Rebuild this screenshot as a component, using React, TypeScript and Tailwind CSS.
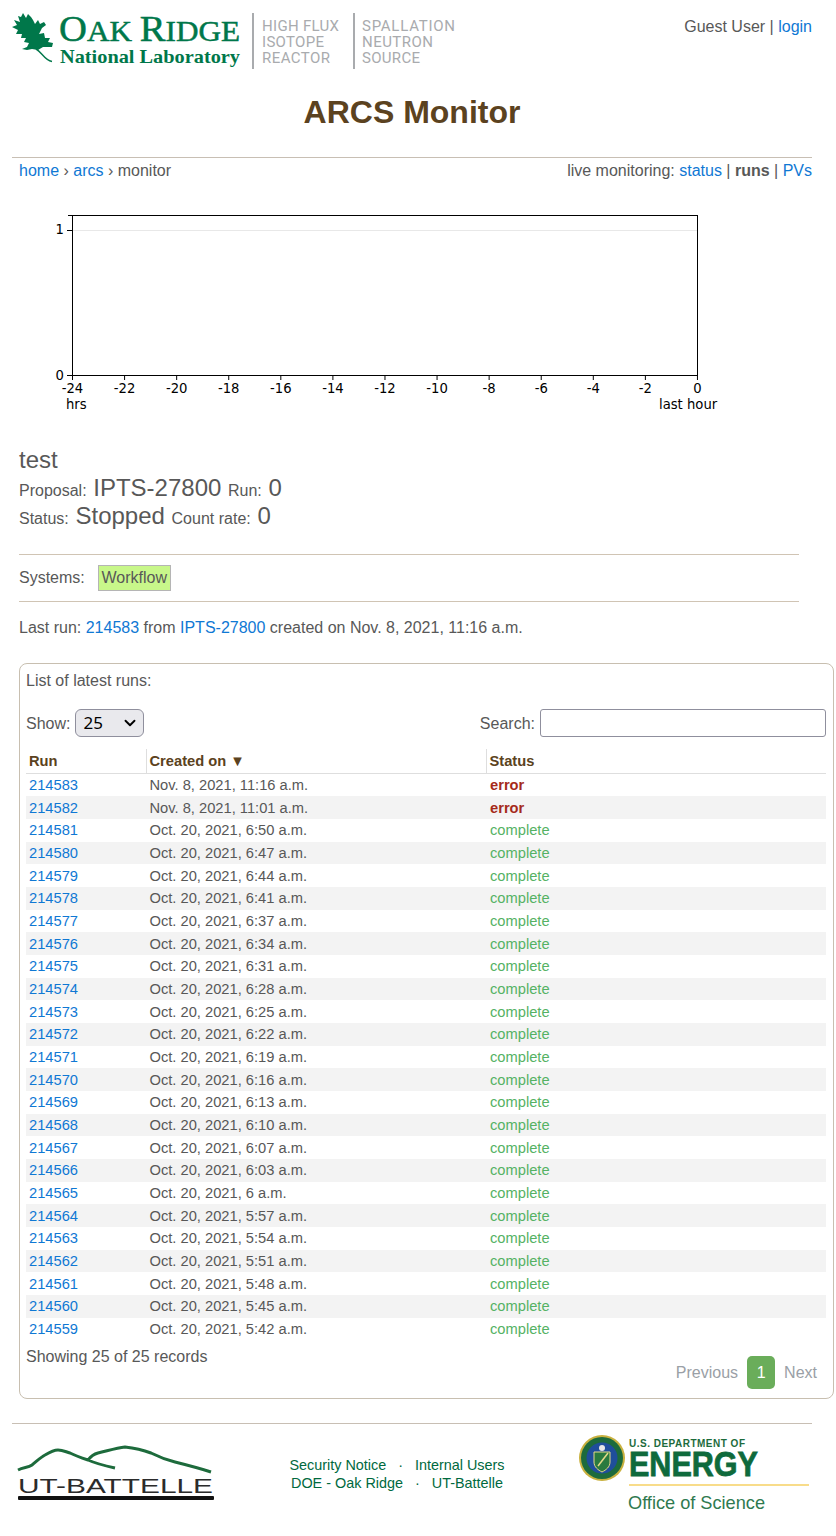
import { ChevronDown } from "lucide-react";

const runs: [number, string, string][] = [
  [214583, "Nov. 8, 2021, 11:16 a.m.", "error"],
  [214582, "Nov. 8, 2021, 11:01 a.m.", "error"],
  [214581, "Oct. 20, 2021, 6:50 a.m.", "complete"],
  [214580, "Oct. 20, 2021, 6:47 a.m.", "complete"],
  [214579, "Oct. 20, 2021, 6:44 a.m.", "complete"],
  [214578, "Oct. 20, 2021, 6:41 a.m.", "complete"],
  [214577, "Oct. 20, 2021, 6:37 a.m.", "complete"],
  [214576, "Oct. 20, 2021, 6:34 a.m.", "complete"],
  [214575, "Oct. 20, 2021, 6:31 a.m.", "complete"],
  [214574, "Oct. 20, 2021, 6:28 a.m.", "complete"],
  [214573, "Oct. 20, 2021, 6:25 a.m.", "complete"],
  [214572, "Oct. 20, 2021, 6:22 a.m.", "complete"],
  [214571, "Oct. 20, 2021, 6:19 a.m.", "complete"],
  [214570, "Oct. 20, 2021, 6:16 a.m.", "complete"],
  [214569, "Oct. 20, 2021, 6:13 a.m.", "complete"],
  [214568, "Oct. 20, 2021, 6:10 a.m.", "complete"],
  [214567, "Oct. 20, 2021, 6:07 a.m.", "complete"],
  [214566, "Oct. 20, 2021, 6:03 a.m.", "complete"],
  [214565, "Oct. 20, 2021, 6 a.m.", "complete"],
  [214564, "Oct. 20, 2021, 5:57 a.m.", "complete"],
  [214563, "Oct. 20, 2021, 5:54 a.m.", "complete"],
  [214562, "Oct. 20, 2021, 5:51 a.m.", "complete"],
  [214561, "Oct. 20, 2021, 5:48 a.m.", "complete"],
  [214560, "Oct. 20, 2021, 5:45 a.m.", "complete"],
  [214559, "Oct. 20, 2021, 5:42 a.m.", "complete"],
];

const ticks = [-24, -22, -20, -18, -16, -14, -12, -10, -8, -6, -4, -2, 0];

function OrnlLogo() {
  return (
    <svg width="446" height="60" viewBox="12 10 446 60" className="block">
      <path
        fill="#00774a"
        d="M38 50 43 47 52 47 53 43 48 42 50 38 45 38 44 33 39 34 42 28 46 25 44 22 40 24 38 20 35 24 33 20 31 17 28 14 26 18 23 13 21 17 18 16 20 22 14 20 17 25 12 27 18 30 16 34 22 34 21 38 26 38 24 42 29 43 27 47 22 49 27 50 32 49Z"
      />
      <path d="M36 49C42 52 44 60 52 61.500" fill="none" stroke="#00774a" strokeWidth="1.400" />
      <text x="59" y="40.500" fill="#00774a" stroke="#00774a" strokeWidth="0.500" fontFamily="Liberation Serif" fontSize="29" textLength="181" lengthAdjust="spacingAndGlyphs">
        <tspan fontSize="36">O</tspan>AK <tspan fontSize="36">R</tspan>IDGE
      </text>
      <text x="60" y="63" fill="#00774a" fontFamily="Liberation Serif" fontWeight="700" fontSize="19.500" textLength="180" lengthAdjust="spacingAndGlyphs">
        National Laboratory
      </text>
      <rect x="252" y="13" width="2" height="56" fill="#a9abae" />
      <rect x="353" y="13" width="2" height="56" fill="#a9abae" />
      <g fill="#a9abae" fontFamily="Roboto" fontSize="15">
        <text x="262" y="31" textLength="77">HIGH FLUX</text>
        <text x="262" y="47" textLength="62">ISOTOPE</text>
        <text x="262" y="63" textLength="68">REACTOR</text>
        <text x="362" y="31" textLength="93">SPALLATION</text>
        <text x="362" y="47" textLength="71">NEUTRON</text>
        <text x="362" y="63" textLength="58">SOURCE</text>
      </g>
    </svg>
  );
}

function UsageChart() {
  return (
    <svg width="730" height="220" viewBox="12 200 730 220" className="block">
      <line x1="72" y1="230.500" x2="697" y2="230.500" stroke="#e8e8e8" />
      <rect x="72.500" y="215.500" width="625" height="160" fill="none" stroke="#000" />
      <line x1="68" y1="215.500" x2="72" y2="215.500" stroke="#000" />
      <line x1="67" y1="230.500" x2="72" y2="230.500" stroke="#000" />
      <line x1="67" y1="375.500" x2="72" y2="375.500" stroke="#000" />
      <g fontFamily="DejaVu Sans" fontSize="13.200" fill="#000">
        <text x="64" y="234" textAnchor="end">1</text>
        <text x="64" y="380" textAnchor="end">0</text>
        {ticks.map((t, i) => {
          const x = 72.5 + i * 52.08;
          return (
            <g key={t}>
              <line x1={x} y1="375" x2={x} y2="380" stroke="#000" />
              <text x={x} y="393" textAnchor="middle">{t}</text>
            </g>
          );
        })}
        <text x="66" y="409">hrs</text>
        <text x="659" y="409">last hour</text>
      </g>
    </svg>
  );
}

function BattelleLogo() {
  return (
    <svg width="204" height="64" viewBox="14 1442 204 64" className="block">
      <path
        d="M18 1470C24 1467 28 1468 32 1465C37 1461 41 1457 45 1455C50 1452 54 1450 58 1450C63 1450 66 1452 70 1453C76 1456 82 1458 88 1460C97 1464 106 1466 115 1468M88 1460C91 1456 94 1454 98 1453C107 1451 116 1448 125 1447C134 1448 143 1450 151 1453C159 1457 167 1460 175 1462C187 1465 199 1468 211 1472"
        fill="none"
        stroke="#1d6b3c"
        strokeWidth="3"
      />
      <text x="18" y="1492.500" fill="#2b2b2b" fontFamily="Liberation Sans" fontSize="21" textLength="195" lengthAdjust="spacingAndGlyphs">
        UT-BATTELLE
      </text>
      <rect x="18" y="1496" width="196" height="4" rx="1" fill="#111" />
    </svg>
  );
}

function DoeLogo() {
  return (
    <svg width="236" height="84" viewBox="576 1432 236 84" className="block">
      <circle cx="602" cy="1458" r="23" fill="#c9b13f" />
      <circle cx="602" cy="1458" r="21" fill="#1d6b3c" />
      <circle cx="602" cy="1458" r="15.500" fill="#1f4e9b" />
      <path d="M594 1452H610V1462C610 1467 606 1470 602 1472C598 1470 594 1467 594 1462Z" fill="#2a7a3f" stroke="#e6d98a" />
      <path d="M598 1466 608 1453" stroke="#e6d98a" strokeWidth="1.500" />
      <circle cx="602" cy="1448" r="3" fill="#e8e8e8" />
      <text x="629" y="1447" fill="#1d6b3c" fontFamily="Liberation Sans" fontWeight="700" fontSize="10" textLength="116" lengthAdjust="spacing">
        U.S. DEPARTMENT OF
      </text>
      <text x="629" y="1476" fill="#0f6a3c" stroke="#0f6a3c" strokeWidth="0.800" fontFamily="Liberation Sans" fontWeight="700" fontSize="35" textLength="129" lengthAdjust="spacingAndGlyphs">
        ENERGY
      </text>
      <rect x="629" y="1484" width="180" height="2" fill="#f8dc8a" />
      <text x="628" y="1509" fill="#2f7a50" fontFamily="Liberation Sans" fontSize="18.500" textLength="137" lengthAdjust="spacingAndGlyphs">
        Office of Science
      </text>
    </svg>
  );
}

export default function App() {
  const link = "text-[#0f78d4]";
  return (
    <div className="w-[836px] bg-white text-base text-[#585858] font-['Liberation_Sans',Arial,sans-serif]">
      <div className="ml-3 w-[800px]">
        {/* Header */}
        <div className="flex h-[81px] items-start justify-between pt-2.5">
          <OrnlLogo />
          <div className="pt-[5px]">
            Guest User | <a className={link}>login</a>
          </div>
        </div>
        <h1 className="h-[77px] border-b border-[#c8bfb4] pt-[13px] text-center text-[32px] leading-[37px] font-bold text-[#5b4220]">
          ARCS Monitor
        </h1>
        <div className="flex h-[26px] items-center justify-between pl-[7px]">
          <div>
            <a className={link}>home</a> › <a className={link}>arcs</a> › monitor
          </div>
          <div>
            live monitoring: <a className={link}>status</a> | <b>runs</b> | <a className={link}>PVs</a>
          </div>
        </div>
        <div className="mt-4">
          <UsageChart />
        </div>

        {/* Instrument status */}
        <div className="mt-[26px] pl-[7px]">
          <div className="text-2xl leading-7">test</div>
          <div className="h-7 leading-[34px]">
            Proposal:<span className="text-2xl leading-none"> IPTS-27800 </span>Run:<span className="text-2xl leading-none"> 0</span>
          </div>
          <div className="h-7 leading-[34px]">
            Status:<span className="text-2xl leading-none"> Stopped </span>Count rate:<span className="text-2xl leading-none"> 0</span>
          </div>
        </div>
        <div className="mt-6 ml-[7px] flex h-[48px] w-[780px] items-center gap-[13px] border-y border-[#d0c4b4]">
          <span>Systems:</span>
          <span className="flex h-[26px] w-[73px] items-center justify-center border border-[#b5b5b5] bg-[#c8f78a]">Workflow</span>
        </div>
        <div className="mt-[15px] pl-[7px] leading-[22px]">
          Last run: <a className={link}>214583</a> from <a className={link}>IPTS-27800</a> created on Nov. 8, 2021, 11:16 a.m.
        </div>
      </div>

      {/* Runs table */}
      <div className="mt-6 ml-[19px] h-[736px] w-[815px] rounded-lg border border-[#c8bfb0] pt-[7px] pr-[7px] pl-[6px]">
        <div className="leading-5">List of latest runs:</div>
        <div className="mt-[18px] flex h-7 items-center justify-between">
          <label className="flex items-center gap-[5px]">
            <span className="pt-0.5">Show:</span>
            <span className="relative flex h-7 w-[69px] items-center rounded-md border border-[#8f8f9d] bg-[#e9e9ed] pl-[7px] font-['Noto_Sans',sans-serif] text-[17px] text-black">
              25
              <ChevronDown className="absolute right-1 h-[18px] w-[18px]" strokeWidth={2.500} />
            </span>
          </label>
          <label className="flex items-center gap-[5px]">
            <span className="pt-0.5">Search:</span>
            <input className="h-7 w-[286px] rounded-[3px] border border-[#8f8f9d] bg-white" />
          </label>
        </div>
        <table className="mt-3 w-[800px] table-fixed border-collapse text-[14.700px]">
          <thead>
            <tr className="h-[24.800px] border-b border-[#dedede] text-left font-bold text-[#5b4220]">
              <th className="w-[120px] pl-[3px]">Run</th>
              <th className="w-[340px] border-l border-[#dedede] pl-[3px]">Created on ▼</th>
              <th className="border-l border-[#dedede] pl-[3px]">Status</th>
            </tr>
          </thead>
          <tbody>
            {runs.map(([run, created, status], i) => (
              <tr key={run} className={i % 2 ? "h-[22.67px] bg-[#f3f3f3]" : "h-[22.67px]"}>
                <td className={`pl-[3px] ${link}`}>{run}</td>
                <td className="pl-[3.500px]">{created}</td>
                <td className={status === "error" ? "pl-1 font-bold text-[#a52a1a]" : "pl-1 text-[#55b264]"}>{status}</td>
              </tr>
            ))}
          </tbody>
        </table>
        <div className="flex justify-between">
          <div className="mt-[7px] leading-5">Showing 25 of 25 records</div>
          <div className="mt-[16px] flex items-center gap-[9px] pr-[9px] text-[#9aa0a6]">
            <span>Previous</span>
            <span className="flex h-[33px] w-7 items-center justify-center rounded-[5px] bg-[#6aad5a] text-white">1</span>
            <span>Next</span>
          </div>
        </div>
      </div>

      {/* Footer */}
      <div className="mt-6 ml-3 flex h-[113px] w-[800px] items-start justify-between border-t border-[#c8bfb4]">
        <div className="mt-[18px] ml-0.5">
          <BattelleLogo />
        </div>
        <div className="mt-8 text-center text-[14.400px] leading-[18px] text-[#00693e]">
          <div>Security Notice &nbsp;&nbsp;·&nbsp;&nbsp; Internal Users</div>
          <div>DOE - Oak Ridge &nbsp;&nbsp;·&nbsp;&nbsp; UT-Battelle</div>
        </div>
        <div className="mt-2">
          <DoeLogo />
        </div>
      </div>
    </div>
  );
}
